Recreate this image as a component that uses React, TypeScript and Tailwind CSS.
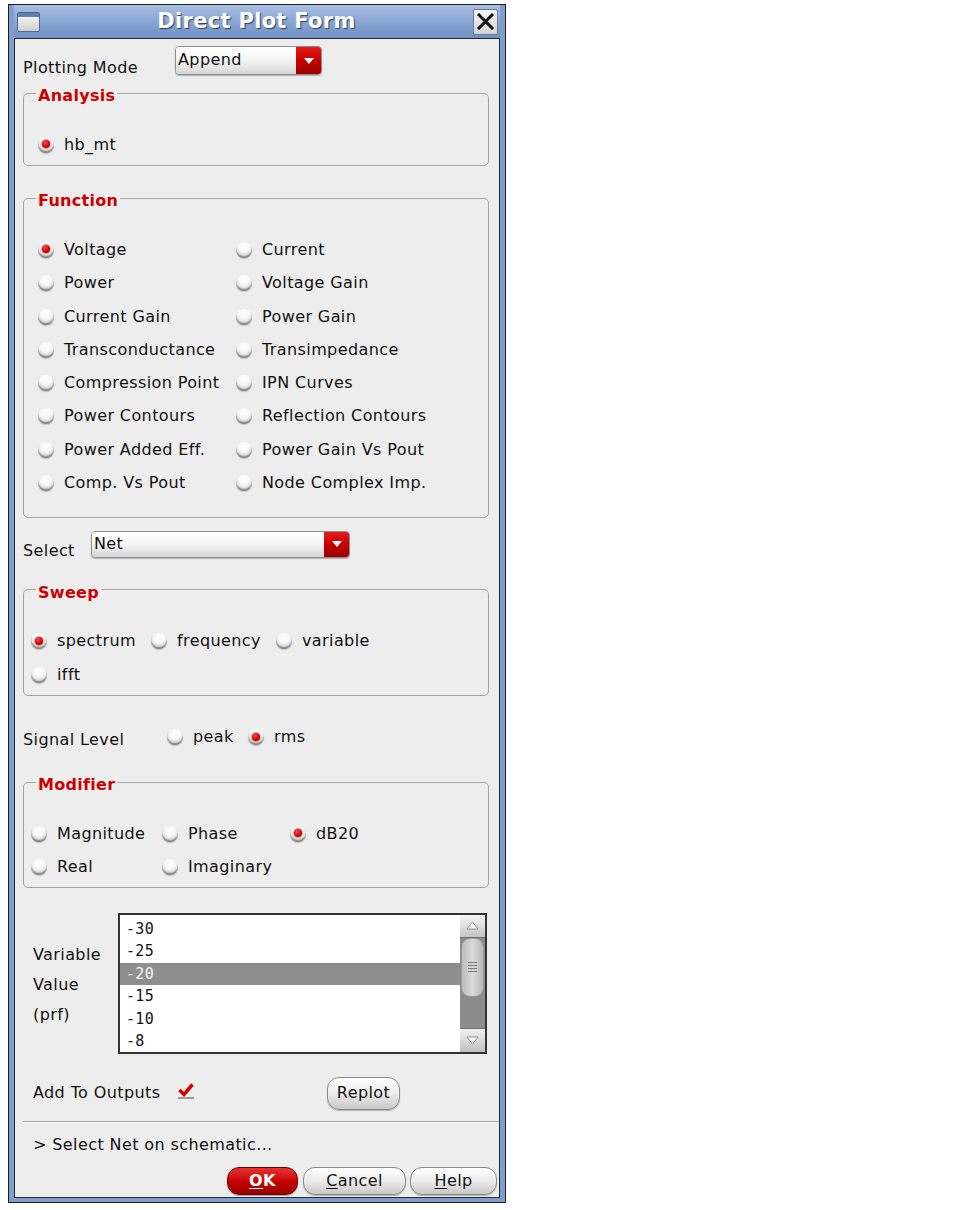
import React from "react";

function Radio({ on = false }: { on?: boolean }) {
  return (
    <span className="relative inline-flex h-[16px] w-[16px] shrink-0 items-center justify-center rounded-full bg-[radial-gradient(circle_at_50%_28%,#ffffff_0%,#f6f6f6_42%,#d0d0d0_68%,#6e6e6e_100%)] shadow-[inset_0_-2px_1px_rgba(0,0,0,0.28),0_1px_1px_rgba(0,0,0,0.2)]">
      {on && (
        <span className="mt-[-1px] h-[8px] w-[8px] rounded-full bg-[radial-gradient(circle_at_40%_35%,#ff4a4a_0%,#d60000_55%,#8a0000_100%)] shadow-[0_0_1px_1px_rgba(90,0,0,0.35)]" />
      )}
    </span>
  );
}

function Opt({ label, on = false, className = "" }: { label: string; on?: boolean; className?: string }) {
  return (
    <div className={`flex items-center gap-[10px] ${className}`}>
      <Radio on={on} />
      <span className="whitespace-nowrap">{label}</span>
    </div>
  );
}

function Arrow() {
  return (
    <svg width="10" height="6" viewBox="0 0 10 6">
      <polygon points="0,0 10,0 5,6" fill="#ffffff" />
    </svg>
  );
}

function Combo({ text, className }: { text: string; className: string }) {
  return (
    <div className={`flex overflow-hidden rounded-[4px] border border-[#8e8e8e] shadow-[0_1px_1px_rgba(0,0,0,0.25)] ${className}`}>
      <div className="flex flex-1 items-center bg-gradient-to-b from-[#ffffff] via-[#f4f4f4] to-[#d6d6d6] pl-[2px] pb-[1px]">{text}</div>
      <div className="flex w-[25px] items-center justify-center bg-gradient-to-b from-[#e21a1a] via-[#c80000] to-[#9a0000]">
        <Arrow />
      </div>
    </div>
  );
}

function Group({ title, children, pb }: { title: string; children: React.ReactNode; pb: string }) {
  return (
    <fieldset className="w-[466px] rounded-[5px] border border-[#a4a4a4]">
      <legend className="ml-[12px] h-[20px] px-[2px] pt-[6px] text-[16px] leading-[14px] font-bold text-[#cc0000] tracking-[0.3px]">{title}</legend>
      <div className={`pt-[25px] ${pb}`}>{children}</div>
    </fieldset>
  );
}

function Row({ children, className = "" }: { children: React.ReactNode; className?: string }) {
  return <div className={`flex h-[33.3px] items-center ${className}`}>{children}</div>;
}

function TriUp() {
  return (
    <svg width="13" height="9" viewBox="0 0 13 9">
      <polygon points="6.5,1 12,8 1,8" fill="#ffffff" stroke="#8a8a8a" strokeWidth="1" />
    </svg>
  );
}
function TriDown() {
  return (
    <svg width="13" height="9" viewBox="0 0 13 9">
      <polygon points="1,1 12,1 6.5,8" fill="#ffffff" stroke="#8a8a8a" strokeWidth="1" />
    </svg>
  );
}

function GreyButton({ children, className }: { children: React.ReactNode; className: string }) {
  return (
    <div className={`flex items-center justify-center rounded-[12px] border border-[#8a8a8a] bg-gradient-to-b from-[#ffffff] via-[#ececec] to-[#c8c8c8] shadow-[0_1px_1px_rgba(0,0,0,0.25)] ${className}`}>
      {children}
    </div>
  );
}

export default function App() {
  const fn: [string, boolean, string][] = [
    ["Voltage", true, "Current"],
    ["Power", false, "Voltage Gain"],
    ["Current Gain", false, "Power Gain"],
    ["Transconductance", false, "Transimpedance"],
    ["Compression Point", false, "IPN Curves"],
    ["Power Contours", false, "Reflection Contours"],
    ["Power Added Eff.", false, "Power Gain Vs Pout"],
    ["Comp. Vs Pout", false, "Node Complex Imp."],
  ];
  const values = ["-30", "-25", "-20", "-15", "-10", "-8"];

  return (
    <div className="h-[1210px] w-[966px] bg-white pl-[8px] pt-[4px] font-['DejaVu_Sans',sans-serif] text-[16px] text-[#111111]">
      <div className="flex h-[1199px] w-[498px] flex-col border border-[#1e1e1e] bg-[#7f9dcf] px-[5px] pb-[4px]">
        {/* title bar */}
        <div className="flex h-[33px] items-center bg-gradient-to-b from-[#a9bfe2] via-[#8aa6d4] to-[#6f8fc3]">
          <div className="ml-[3px] mt-[1px] flex h-[20px] w-[23px] flex-col overflow-hidden rounded-[2px] border border-[#4f6890]">
            <div className="h-[4px] bg-[#5f7fb0]" />
            <div className="flex-1 bg-gradient-to-b from-[#f2f2f2] to-[#cfcfcf]" />
          </div>
          <div className="flex-1 text-center text-[21px] font-bold leading-[33px] tracking-[0.3px] text-white [text-shadow:1px_1px_1px_#2c3e62]">
            Direct Plot Form
          </div>
          <div className="mr-[2px] flex h-[26px] w-[25px] items-center justify-center rounded-[2px] border border-[#6a7a94] bg-gradient-to-b from-[#f6f6f6] to-[#d2d2d2]">
            <svg width="17" height="17" viewBox="0 0 17 17">
              <path d="M2 2 L15 15 M15 2 L2 15" stroke="#111" strokeWidth="3" strokeLinecap="square" />
            </svg>
          </div>
        </div>

        {/* content */}
        <div className="flex h-[1160px] flex-col border border-[#2a2a2a] bg-[#ededed] pl-[8px] tracking-[0.4px]">
          {/* Plotting Mode */}
          <div className="mt-[7px] flex h-[29px] items-start">
            <div className="mt-[12px] w-[152px] leading-[20px]">Plotting Mode</div>
            <Combo text="Append" className="h-[29px] w-[147px]" />
          </div>

          {/* Analysis */}
          <div className="mt-[8px]">
            <Group title="Analysis" pb="pb-[4px]">
              <Row className="pl-[14px]">
                <Opt label="hb_mt" on />
              </Row>
            </Group>
          </div>

          {/* Function */}
          <div className="mt-[22px]">
            <Group title="Function" pb="pb-[17px]">
              <div className="pl-[14px]">
                {fn.map(([a, on, b]) => (
                  <Row key={a}>
                    <Opt label={a} on={on} className="w-[198px]" />
                    <Opt label={b} />
                  </Row>
                ))}
              </div>
            </Group>
          </div>

          {/* Select */}
          <div className="mt-[13px] flex h-[27px] items-start">
            <div className="mt-[10px] w-[68px] leading-[20px]">Select</div>
            <Combo text="Net" className="h-[27px] w-[259px]" />
          </div>

          {/* Sweep */}
          <div className="mt-[22px]">
            <Group title="Sweep" pb="pb-[4px]">
              <div className="pl-[7px]">
                <Row>
                  <Opt label="spectrum" on className="w-[120px]" />
                  <Opt label="frequency" className="w-[125px]" />
                  <Opt label="variable" />
                </Row>
                <Row>
                  <Opt label="ifft" />
                </Row>
              </div>
            </Group>
          </div>

          {/* Signal Level */}
          <div className="mt-[29px] flex h-[24px] items-center">
            <div className="w-[144px] pt-[5px]">Signal Level</div>
            <Opt label="peak" className="w-[81px]" />
            <Opt label="rms" on />
          </div>

          {/* Modifier */}
          <div className="mt-[23px]">
            <Group title="Modifier" pb="pb-[3px]">
              <div className="pl-[7px]">
                <Row>
                  <Opt label="Magnitude" className="w-[131px]" />
                  <Opt label="Phase" className="w-[128px]" />
                  <Opt label="dB20" on />
                </Row>
                <Row>
                  <Opt label="Real" className="w-[131px]" />
                  <Opt label="Imaginary" />
                </Row>
              </div>
            </Group>
          </div>

          {/* Variable value list */}
          <div className="mt-[25px] flex h-[141px] pl-[10px]">
            <div className="w-[85px] pt-[27px] leading-[30px]">
              <div>Variable</div>
              <div>Value</div>
              <div>(prf)</div>
            </div>
            <div className="flex h-[141px] w-[369px] border-2 border-[#333333] bg-white">
              <div className="flex-1 pt-[3px] font-['DejaVu_Sans_Mono',monospace] text-[15px] tracking-[0.3px]">
                {values.map((v) => (
                  <div
                    key={v}
                    className={`flex h-[22.5px] items-center pl-[6px] ${v === "-20" ? "bg-[#8e8e8e] text-[#f4f4f4]" : "text-[#111111]"}`}
                  >
                    {v}
                  </div>
                ))}
              </div>
              <div className="flex w-[25px] flex-col bg-[#8c8c8c]">
                <div className="flex h-[23px] items-center justify-center border-b border-[#6e6e6e] bg-gradient-to-b from-[#f6f6f6] to-[#c4c4c4]">
                  <TriUp />
                </div>
                <div className="mx-[1px] flex h-[59px] flex-col items-center justify-center gap-[2px] rounded-[9px] border border-[#9a9a9a] bg-gradient-to-r from-[#bdbdbd] via-[#dadada] to-[#b8b8b8]">
                  <div className="h-[1px] w-[9px] bg-[#7a7a7a]" />
                  <div className="h-[1px] w-[9px] bg-[#7a7a7a]" />
                  <div className="h-[1px] w-[9px] bg-[#7a7a7a]" />
                  <div className="h-[1px] w-[9px] bg-[#7a7a7a]" />
                </div>
                <div className="flex-1" />
                <div className="flex h-[24px] items-center justify-center border-t border-[#6e6e6e] bg-gradient-to-b from-[#f2f2f2] to-[#c0c0c0]">
                  <TriDown />
                </div>
              </div>
            </div>
          </div>

          {/* Add To Outputs */}
          <div className="mt-[23px] flex h-[33px] items-center pl-[10px]">
            <div className="w-[144px]">Add To Outputs</div>
            <svg width="18" height="18" viewBox="0 0 18 18" className="mt-[-5px]">
              <rect x="1" y="15" width="16" height="2" fill="#9a9a9a" />
              <path d="M2.5 8 L7 12.5 L15.5 2.5" stroke="#d40000" strokeWidth="3.5" fill="none" strokeLinejoin="miter" />
            </svg>
            <GreyButton className="ml-[132px] h-[33px] w-[73px] rounded-[11px]">Replot</GreyButton>
          </div>

          {/* separator */}
          <div className="mt-[11px] h-[1px] bg-[#a8a8a8]" />
          <div className="h-[1px] bg-[#fbfbfb]" />

          {/* status */}
          <div className="mt-[12px] pl-[10px] leading-[20px]">&gt; Select Net on schematic...</div>

          {/* buttons */}
          <div className="mt-[12px] flex justify-end pr-[2px]">
            <div className="flex h-[28px] w-[71px] items-center justify-center rounded-[12px] border border-[#6a0000] bg-gradient-to-b from-[#e83030] via-[#c80000] to-[#9c0000] font-bold text-white shadow-[0_1px_1px_rgba(0,0,0,0.3)]">
              <span>
                <span className="underline underline-offset-2">O</span>K
              </span>
            </div>
            <GreyButton className="ml-[5px] h-[28px] w-[103px]">
              <span>
                <span className="underline underline-offset-2">C</span>ancel
              </span>
            </GreyButton>
            <GreyButton className="ml-[4px] h-[28px] w-[87px]">
              <span>
                <span className="underline underline-offset-2">H</span>elp
              </span>
            </GreyButton>
          </div>
        </div>
      </div>
    </div>
  );
}
